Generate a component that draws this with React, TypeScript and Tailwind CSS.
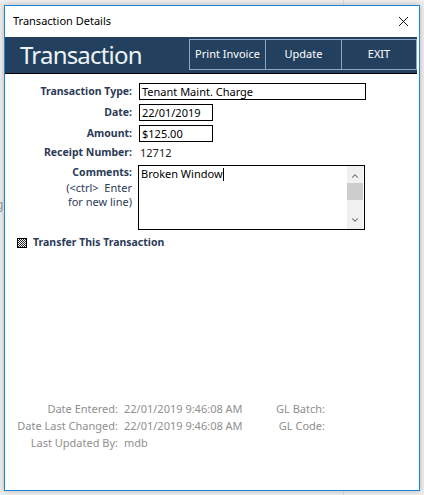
import { X, ChevronUp, ChevronDown } from "lucide-react"

const font = { fontFamily: '"Noto Sans", "Open Sans", sans-serif' }

function Field({ label, h = "h-[21px]", children }: { label: string; h?: string; children: React.ReactNode }) {
  return (
    <div className={`flex items-center ${h}`}>
      <div className="w-[128px] pr-[1px] text-right text-[10.5px] font-bold text-[#2c3b57]">{label}</div>
      <div className="pl-[6px] flex">{children}</div>
    </div>
  )
}

export default function App() {
  return (
    <div className="relative w-[424px] h-[495px] bg-[#efefef] pt-[5px] pl-[4px] overflow-hidden" style={font}>
      {/* background bits behind the dialog */}
      <div className="absolute left-[343px] top-0 h-full w-px bg-[#d9d9d9]" />
      <div className="absolute left-[-4px] top-[196px] text-[12px] text-[#9a9a9a]">g</div>

      <div className="relative flex flex-col w-[416px] h-[486px] border border-[#1c86d9] bg-white shadow-[0_0_6px_rgba(0,0,0,0.25)]">
        {/* title bar */}
        <div className="flex items-center justify-between h-[31px] pl-[8px] pr-[7px]">
          <span className="text-[11px] text-black">Transaction Details</span>
          <X className="w-[17px] h-[17px] text-black" strokeWidth={1.3} />
        </div>

        {/* header */}
        <div className="flex items-center justify-between h-[37px] mr-[2px] bg-[#23415f] border-b border-black">
          <span className="pl-[15px] text-[24px] tracking-[-0.8px] leading-none text-[#eef3f8] -mt-[1px]">Transaction</span>
          <div className="flex self-start mt-[2px] border border-[#8ba6c4]">
            <div className="w-[76px] h-[29px] flex items-center justify-center text-[11px] text-white border-r border-[#8ba6c4]">Print Invoice</div>
            <div className="w-[76px] h-[29px] flex items-center justify-center text-[11px] text-white border-r border-[#8ba6c4]">Update</div>
            <div className="w-[74px] h-[29px] flex items-center justify-center text-[11px] text-white">EXIT</div>
          </div>
        </div>

        {/* form */}
        <div className="flex flex-col pt-[7px]">
          <Field label="Transaction Type:">
            <div className="w-[227px] h-[17px] border border-black px-[2px] text-[11px] leading-[15px] text-black">Tenant Maint. Charge</div>
          </Field>
          <Field label="Date:">
            <div className="w-[74px] h-[17px] border border-black px-[2px] text-[11px] leading-[15px] text-black">22/01/2019</div>
          </Field>
          <Field label="Amount:">
            <div className="w-[74px] h-[17px] border border-black px-[2px] text-[11px] leading-[15px] text-black">$125.00</div>
          </Field>
          <Field label="Receipt Number:" h="h-[18px]">
            <div className="pl-[1px] text-[11px] text-[#222]">12712</div>
          </Field>

          <div className="flex mt-[3px]">
            <div className="w-[128px] flex flex-col items-end pr-[1px] text-[#2c3b57]">
              <span className="text-[10.5px] font-bold leading-[14px]">Comments:</span>
              <span className="text-[11px] leading-[14px] mt-[2px]">(&lt;ctrl&gt;&nbsp; Enter</span>
              <span className="text-[11px] leading-[14px]">for new line)</span>
            </div>
            <div className="ml-[5px] flex w-[227px] h-[65px] border border-black">
              <div className="flex-1 px-[2px] text-[11px] leading-[15px] text-black">
                Broken Window<span className="inline-block w-px h-[13px] bg-black align-middle -mt-[2px]" />
              </div>
              <div className="w-[16px] mr-px flex flex-col items-center bg-[#f0f0f0]">
                <ChevronUp className="w-[10px] h-[10px] mt-[5px] text-[#606060]" strokeWidth={2.5} />
                <div className="w-full h-[17px] mt-[2px] bg-[#cdcdcd]" />
                <div className="flex-1" />
                <ChevronDown className="w-[10px] h-[10px] mb-[4px] text-[#606060]" strokeWidth={2.5} />
              </div>
            </div>
          </div>

          <div className="flex items-center h-[16px] mt-[5px] pl-[12px]">
            <div className="w-[10px] h-[10px] border border-black bg-[repeating-conic-gradient(#222_0_25%,#fff_0_50%)] bg-[length:2px_2px]" />
            <span className="ml-[6px] text-[10.5px] font-bold text-[#2c3b57]">Transfer This Transaction</span>
          </div>
        </div>

        <div className="flex-1" />

        {/* audit info */}
        <div className="flex pb-[38px] text-[11px] text-[#8f8f8f]">
          <div className="w-[113px] flex flex-col items-end">
            <span className="h-[17px]">Date Entered:</span>
            <span className="h-[17px]">Date Last Changed:</span>
            <span className="h-[17px]">Last Updated By:</span>
          </div>
          <div className="w-[150px] flex flex-col pl-[6px]">
            <span className="h-[17px]">22/01/2019 9:46:08 AM</span>
            <span className="h-[17px]">22/01/2019 9:46:08 AM</span>
            <span className="h-[17px]">mdb</span>
          </div>
          <div className="w-[57px] flex flex-col items-end">
            <span className="h-[17px]">GL Batch:</span>
            <span className="h-[17px]">GL Code:</span>
          </div>
        </div>
      </div>
    </div>
  )
}
